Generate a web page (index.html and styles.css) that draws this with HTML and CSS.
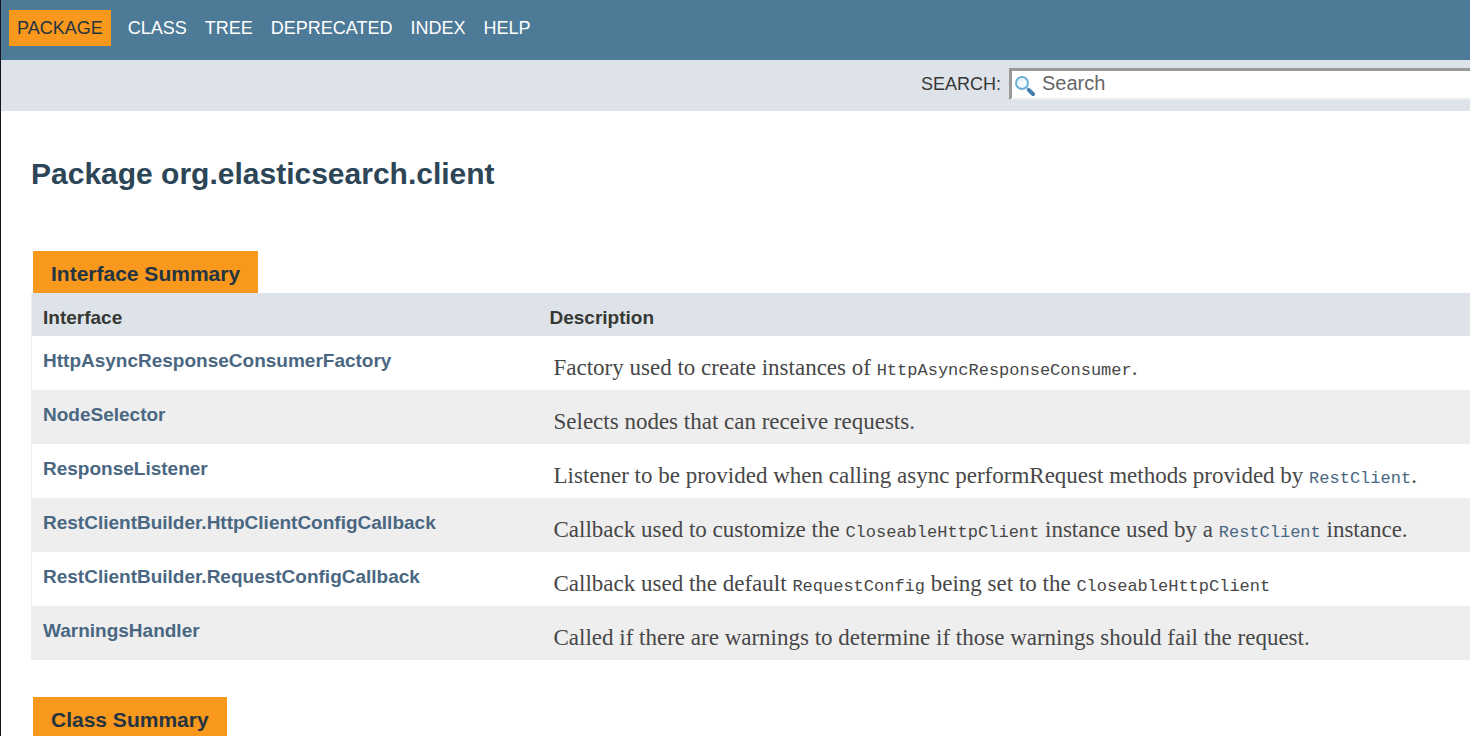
FILE: index.html
```html
<!DOCTYPE html>
<html lang="en">
<head>
<meta charset="utf-8">
<title>org.elasticsearch.client</title>
<link rel="stylesheet" href="styles.css">
</head>
<body>
<header>
  <nav class="top-nav">
    <ul class="nav-list">
      <li class="nav-current">PACKAGE</li>
      <li><a href="#">CLASS</a></li>
      <li><a href="#">TREE</a></li>
      <li><a href="#">DEPRECATED</a></li>
      <li><a href="#">INDEX</a></li>
      <li><a href="#">HELP</a></li>
    </ul>
  </nav>
  <div class="sub-nav">
    <label for="search">SEARCH:</label>
    <div class="search-box">
      <svg class="search-icon" viewBox="0 0 22 22" aria-hidden="true">
        <path d="M13 13 15 15" stroke="#8fb4cc" stroke-width="2.4"/>
        <path d="M15 15.2 19 19.2" stroke="#3f7fae" stroke-width="4" stroke-linecap="round"/>
        <circle cx="8" cy="8" r="6" fill="#f3fbfe" stroke="#6ab0d6" stroke-width="2"/>
        <path d="M4.5 8a3.5 3.5 0 0 1 3.5-3.5" fill="none" stroke="#cfeaf6" stroke-width="1"/>
      </svg>
      <input id="search" type="text" placeholder="Search">
    </div>
  </div>
</header>
<main>
  <h1>Package org.elasticsearch.client</h1>
  <table class="summary">
    <caption><span>Interface Summary</span></caption>
    <thead>
      <tr><th class="col-name" scope="col">Interface</th><th scope="col">Description</th></tr>
    </thead>
    <tbody>
      <tr><th scope="row"><a href="#">HttpAsyncResponseConsumerFactory</a></th><td>Factory used to create instances of <code>HttpAsyncResponseConsumer</code>.</td></tr>
      <tr><th scope="row"><a href="#">NodeSelector</a></th><td>Selects nodes that can receive requests.</td></tr>
      <tr><th scope="row"><a href="#">ResponseListener</a></th><td>Listener to be provided when calling async performRequest methods provided by <a href="#"><code>RestClient</code></a>.</td></tr>
      <tr><th scope="row"><a href="#">RestClientBuilder.HttpClientConfigCallback</a></th><td>Callback used to customize the <code>CloseableHttpClient</code> instance used by a <a href="#"><code>RestClient</code></a> instance.</td></tr>
      <tr><th scope="row"><a href="#">RestClientBuilder.RequestConfigCallback</a></th><td>Callback used the default <code>RequestConfig</code> being set to the <code>CloseableHttpClient</code></td></tr>
      <tr><th scope="row"><a href="#">WarningsHandler</a></th><td>Called if there are warnings to determine if those warnings should fail the request.</td></tr>
    </tbody>
  </table>
  <table class="summary">
    <caption><span>Class Summary</span></caption>
  </table>
</main>
</body>
</html>
```
FILE: styles.css
```css
* { box-sizing: border-box; }
body {
  margin: 0;
  border-left: 1px solid #14141c;
  background: #fff;
  color: #353833;
  font-family: "Liberation Sans", Arial, sans-serif;
}
a { color: #4a6782; text-decoration: none; }
.top-nav { background: #4d7a97; padding: 10px 8px 14px; }
.nav-list {
  display: flex;
  align-items: center;
  gap: 18px;
  margin: 0;
  padding: 0;
  list-style: none;
  font-size: 18px;
  line-height: 36px;
  color: #fff;
}
.nav-list a { color: #fff; }
.nav-current {
  margin-right: -1px;
  padding: 0 8px;
  background: #f8981d;
  color: #253441;
}
.sub-nav {
  display: flex;
  justify-content: flex-end;
  align-items: flex-start;
  gap: 8px;
  padding: 8px 0 11px;
  background: #dee3e9;
  font-size: 18px;
  line-height: 32px;
}
.search-box {
  display: flex;
  align-items: flex-start;
  width: 461px;
  height: 32px;
  border: solid #999;
  border-width: 3px 0 0 3px;
  border-bottom: 2px solid #eceef0;
  background: #fff;
}
.search-icon { flex: none; width: 22px; height: 22px; margin: 4px 6px 0 2px; }
.search-box input {
  flex: 1;
  min-width: 0;
  height: 25px;
  padding: 0;
  border: 0;
  outline: 0;
  background: transparent;
  font: 20px "Liberation Sans", Arial, sans-serif;
}
.search-box input::placeholder { color: #666; opacity: 1; }
main { padding: 44px 0 0 30px; }
h1 {
  margin: 0 0 58px;
  color: #2c4557;
  font-size: 30px;
  line-height: 38px;
}
.summary {
  width: 100%;
  margin-bottom: 37px;
  border-collapse: collapse;
  border-left: 1px solid #eee;
}
.summary:last-child { margin-bottom: 0; }
caption { text-align: left; padding-left: 2px; }
caption span {
  display: inline-block;
  padding: 4px 18px 0;
  background: #f8981d;
  color: #253441;
  font-size: 21px;
  font-weight: bold;
  line-height: 38px;
  vertical-align: top;
}
thead { background: #dee3e9; }
.summary th {
  padding: 0 0 0 11px;
  font-size: 19px;
  text-align: left;
  vertical-align: top;
}
.summary thead th { padding: 9px 0 2px; line-height: 32px; }
.summary thead .col-name { width: 518px; padding-left: 11px; }
.summary tbody th { padding-top: 9px; line-height: 32px; }
tbody tr:nth-child(even) { background: #eeeeef; }
td {
  padding: 16px 0 6px 4px;
  color: #474747;
  font-family: Georgia, "Liberation Serif", serif;
  font-size: 23px;
  line-height: 32px;
  white-space: nowrap;
}
code {
  font-family: "Liberation Mono", monospace;
  font-size: 17px;
  line-height: 1;
}
```
